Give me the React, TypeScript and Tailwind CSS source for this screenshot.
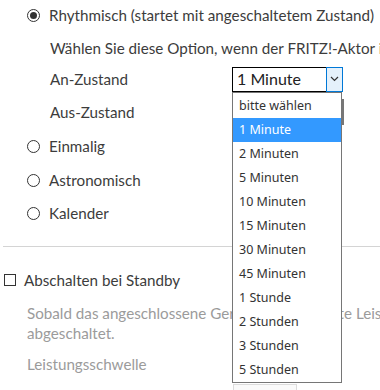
import React from 'react';

const options = [
  'bitte wählen',
  '1 Minute',
  '2 Minuten',
  '5 Minuten',
  '10 Minuten',
  '15 Minuten',
  '30 Minuten',
  '45 Minuten',
  '1 Stunde',
  '2 Stunden',
  '3 Stunden',
  '5 Stunden',
];

const Radio = ({ checked }: { checked?: boolean }) => (
  <span className="w-[13px] h-[13px] rounded-full border-[1.5px] border-[#333] flex items-center justify-center shrink-0">
    {checked && <span className="w-[7px] h-[7px] rounded-full bg-[#333]" />}
  </span>
);

const App = () => {
  const selected = '1 Minute';

  return (
    <div className="w-[380px] h-[390px] overflow-hidden relative bg-white text-[#3c3c3c] font-['Lato','Liberation_Sans',sans-serif] text-[15.2px]">
      <div className="w-[640px] whitespace-nowrap">
        {/* Zeitplan */}
        <div className="pl-[27px]">
          <div className="h-[30px] flex items-center gap-[9px]">
            <Radio checked />
            <span>Rhythmisch (startet mit angeschaltetem Zustand)</span>
          </div>
          <div className="pl-[23px]">
            <div className="h-[36px] flex items-center">
              Wählen Sie diese Option, wenn der FRITZ!-Aktor in einem bestimmten Rhythmus schalten soll.
            </div>
            <div className="h-[26px] flex items-center">
              <span className="w-[182px]">An-Zustand</span>
              <div className="relative">
                <div className="w-[111px] h-[25px] flex border border-black bg-white">
                  <span className="flex-1 flex items-center pl-[4px] text-[#222] text-[16px]">{selected}</span>
                  <span className="w-[17px] -my-px -mr-px border border-[#0078d7] bg-[#e5f1fb] flex items-center justify-center">
                    <svg width="9" height="6" viewBox="0 0 9 6" fill="none" stroke="#333" strokeWidth="1.2">
                      <path d="M1 1l3.5 3.5L8 1" />
                    </svg>
                  </span>
                </div>
                {/* Auswahlliste */}
                <div className="absolute left-0 top-[25px] w-[110px] z-10 bg-white border border-[#767676] pt-px font-['Noto_Sans','Open_Sans',sans-serif] text-[12.5px]">
                  {options.map(o => (
                    <div
                      key={o}
                      className={`h-[24px] flex items-center pl-[6px] pt-px ${o === selected ? 'bg-[#3399ff] text-white' : 'text-[#333]'}`}
                    >
                      {o}
                    </div>
                  ))}
                  <div className="absolute -right-[3px] top-[6px] w-[2px] h-[26px] bg-[#777]" />
                </div>
              </div>
            </div>
            <div className="h-[40px] flex items-center">Aus-Zustand</div>
          </div>
          <div className="h-[28px] flex items-center gap-[9px]">
            <Radio />
            <span>Einmalig</span>
          </div>
          <div className="h-[40px] flex items-center gap-[9px]">
            <Radio />
            <span>Astronomisch</span>
          </div>
          <div className="h-[26px] flex items-center gap-[9px]">
            <Radio />
            <span>Kalender</span>
          </div>
        </div>

        <div className="mt-[20px] ml-[3px] border-t border-[#d4d4d4]" />

        {/* Standby */}
        <div className="mt-[21px] pl-[4px] h-[24px] flex items-center gap-[8px]">
          <span className="w-[12px] h-[12px] border border-[#333] shrink-0" />
          <span>Abschalten bei Standby</span>
        </div>
        <div className="pl-[27px] text-[#9b9b9b]">
          <p className="mt-[11px] leading-[20px]">
            Sobald das angeschlossene Gerät die eingestellte Leistungsschwelle unterschreitet, wird es
            <br />
            abgeschaltet.
          </p>
          <div className="mt-[11px] h-[20px] flex items-center">Leistungsschwelle</div>
          <div className="mt-[10px] ml-[206px] w-[64px] h-[24px] border border-[#dcdcdc] bg-[#fafafa]" />
        </div>
      </div>
    </div>
  );
};

export default App;
